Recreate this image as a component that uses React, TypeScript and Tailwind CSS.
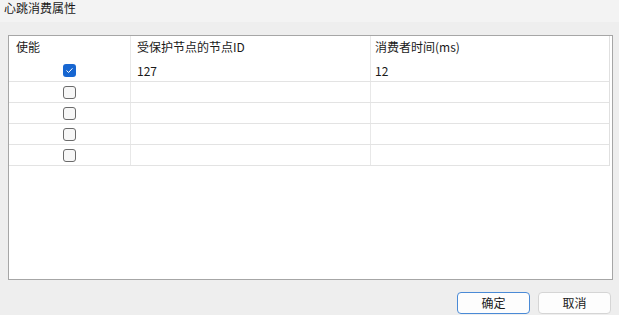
import React from "react";

const font = { fontFamily: '"Noto Sans CJK SC", "Noto Sans", sans-serif' };

function Check({ checked }: { checked: boolean }) {
  if (checked) {
    return (
      <div className="w-[13px] h-[13px] rounded-[3px] bg-[#1766d1] flex items-center justify-center">
        <svg width="9" height="9" viewBox="0 0 9 9">
          <path d="M1.8 4.8 L3.6 6.5 L7.2 2.6" fill="none" stroke="#ffffff" strokeWidth="1" strokeLinecap="round" strokeLinejoin="round" />
        </svg>
      </div>
    );
  }
  return <div className="w-[13px] h-[13px] rounded-[3px] border border-[#6b6b6b] bg-[#f7f7f7]" />;
}

const rows = [
  { c: true, id: "127", t: "12" },
  { c: false, id: "", t: "" },
  { c: false, id: "", t: "" },
  { c: false, id: "", t: "" },
  { c: false, id: "", t: "" },
];

export default function App() {
  return (
    <div className="w-[619px] h-[315px] bg-[#eeeeee] flex flex-col text-[12px] text-[#1a1a1a]" style={font}>
      <div className="h-[22px] bg-[#f3f3f3] pl-[4px] leading-[16px] text-[12px] text-[#1a1a1a]">心跳消费属性</div>
      <div className="ml-[8px] mt-[13px] w-[605px] h-[245px] border border-[#a6a6a6] bg-white flex">
        <div className="w-[600px] flex flex-col">
          <div className="flex h-[24px]">
            <div className="w-[122px] pl-[7px] pt-[3px] leading-[16px] border-r border-[#e8e8e8]">使能</div>
            <div className="w-[240px] pl-[6px] pt-[3px] leading-[16px] border-r border-[#e8e8e8]">受保护节点的节点ID</div>
            <div className="w-[238px] pl-[4px] pt-[3px] leading-[16px]">消费者时间(ms)</div>
          </div>
          {rows.map((r, i) => (
            <div key={i} className={`flex border-b border-[#e3e3e3] ${i === 0 ? "h-[22px]" : "h-[21px]"}`}>
              <div className="w-[122px] flex items-center justify-center border-r border-[#e8e8e8]">
                <Check checked={r.c} />
              </div>
              <div className="w-[240px] pl-[6px] flex items-center leading-[16px] border-r border-[#e8e8e8]">{r.id}</div>
              <div className="w-[238px] pl-[4px] flex items-center leading-[16px]">{r.t}</div>
            </div>
          ))}
        </div>
        <div className="w-[1px] h-[130px] bg-[#e0e0e0]" />
      </div>
      <div className="flex justify-end gap-[8px] mt-[12px] pr-[8px]">
        <button className="w-[73px] h-[22px] rounded-[4px] bg-[#fdfdfd] border border-[#4a8ad6] text-[12px] leading-[20px] text-[#1a1a1a]">确定</button>
        <button className="w-[73px] h-[22px] rounded-[4px] bg-[#fdfdfd] border border-[#d5d5d5] text-[12px] leading-[20px] text-[#1a1a1a]">取消</button>
      </div>
    </div>
  );
}
